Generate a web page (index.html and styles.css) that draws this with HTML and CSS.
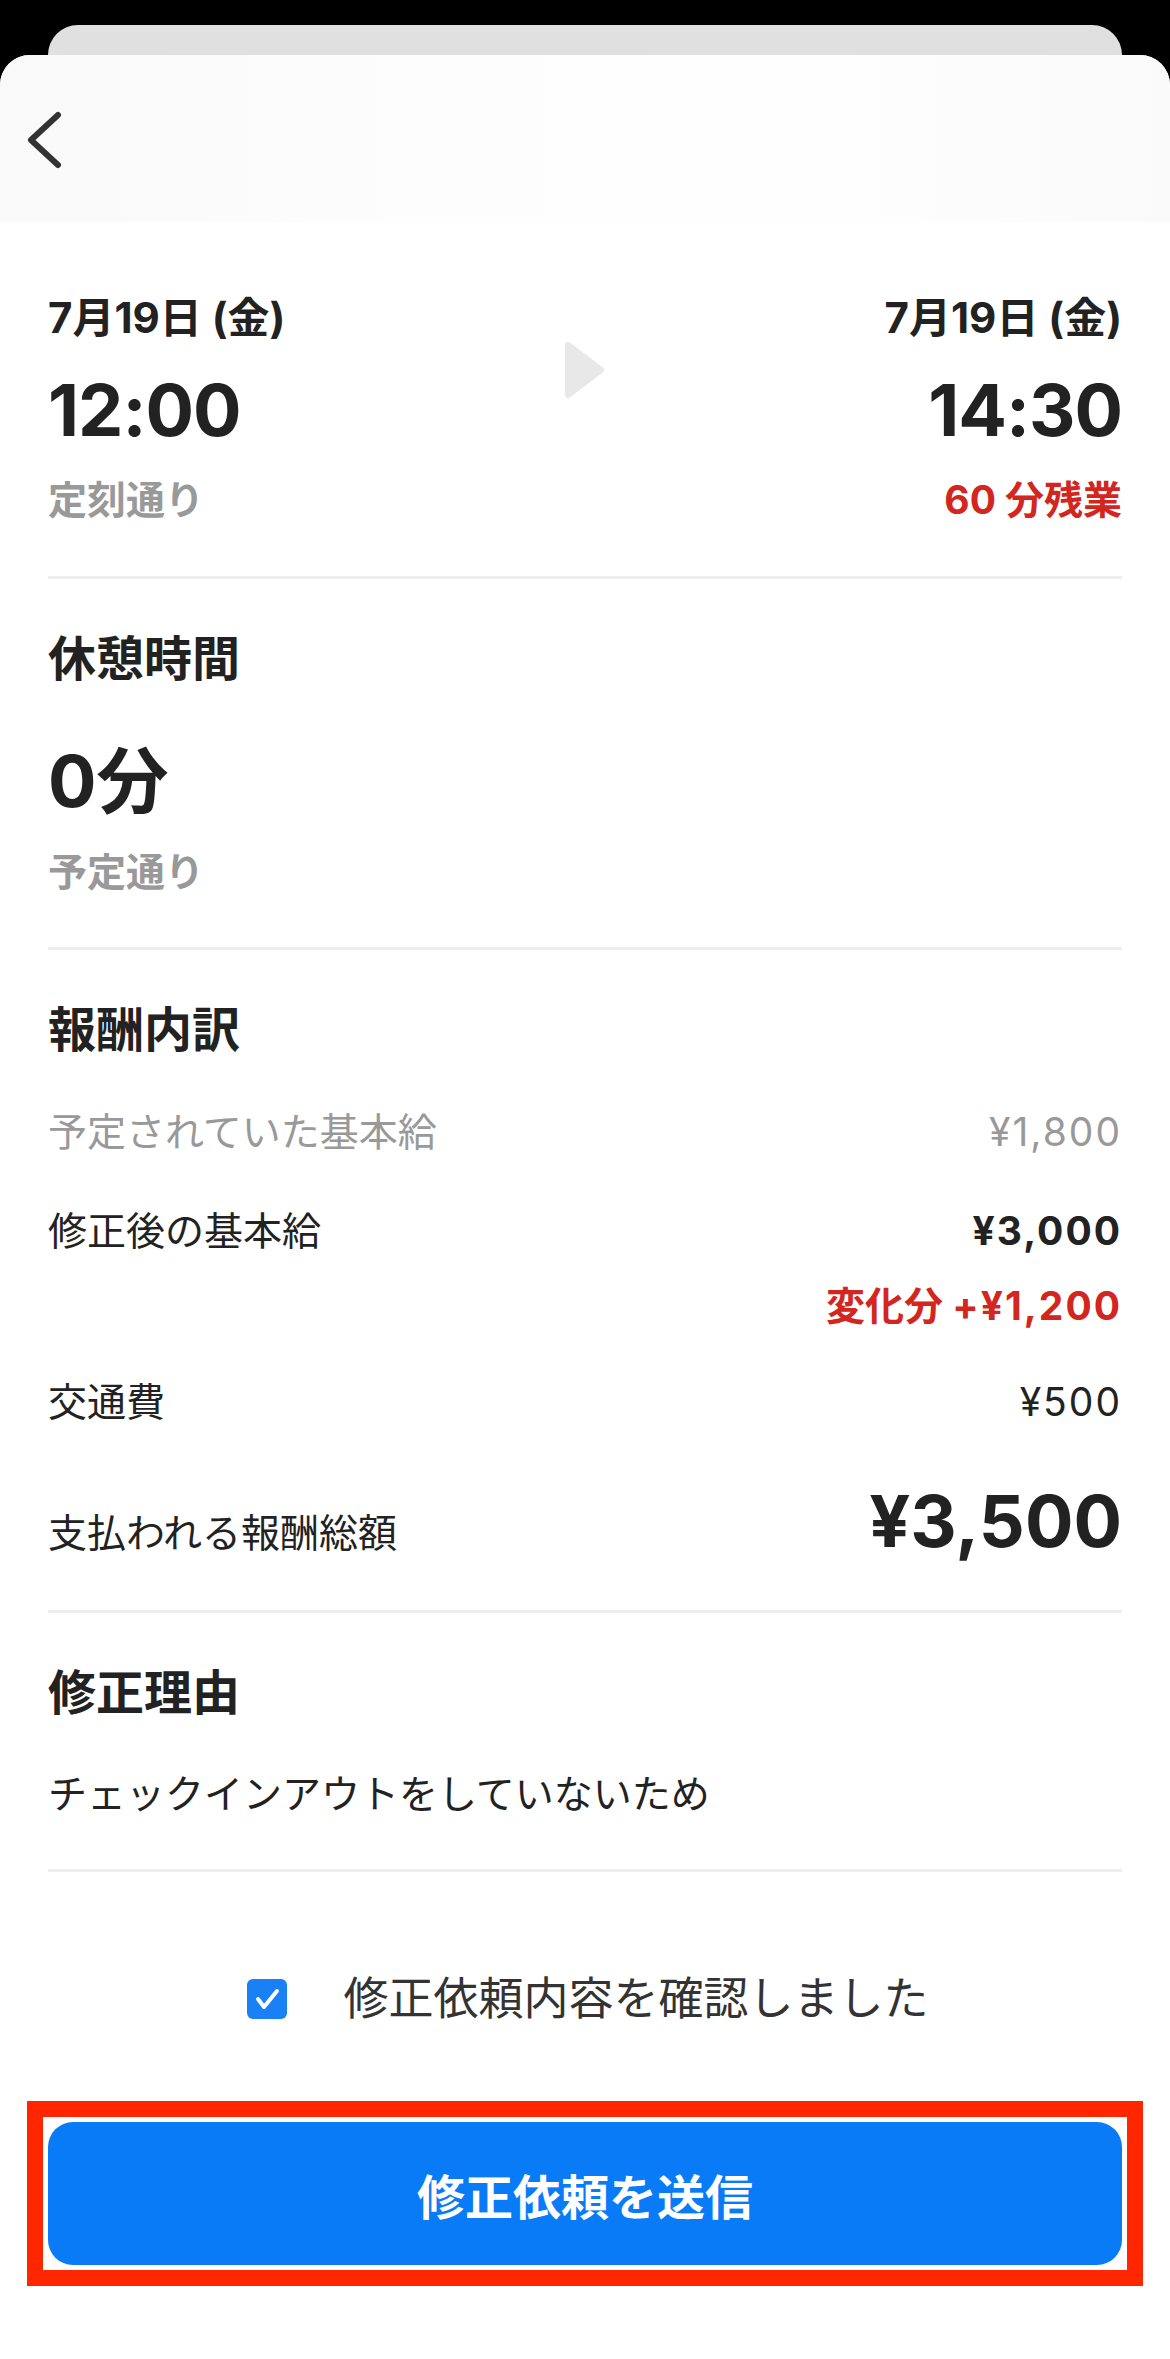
FILE: index.html
```html
<!DOCTYPE html>
<html lang="ja">
<head>
    <meta charset="UTF-8">
    <meta name="viewport" content="width=device-width, initial-scale=1.0">
    <title>修正依頼</title>
    <link rel="stylesheet" href="styles.css">
</head>
<body>
    <div class="back-card"></div>

    <div class="sheet">
        <header class="nav">
            <svg class="back-icon" width="40" height="60" viewBox="0 0 40 60">
                <path d="M33 4 L6 29 L33 54" fill="none" stroke="#333" stroke-width="6" stroke-linecap="round" stroke-linejoin="round"/>
            </svg>
        </header>

        <main class="content">
            <!-- 勤務時間 -->
            <section class="section times">
                <div class="time-col">
                    <p class="date">7月19日 (金)</p>
                    <p class="time">12:00</p>
                    <p class="note">定刻通り</p>
                </div>
                <svg class="arrow" width="44" height="60" viewBox="0 0 44 60">
                    <polygon points="5,5 38,30 5,55" fill="#e8e8e8" stroke="#e8e8e8" stroke-width="6" stroke-linejoin="round"/>
                </svg>
                <div class="time-col right">
                    <p class="date">7月19日 (金)</p>
                    <p class="time">14:30</p>
                    <p class="note red"><span class="num">60</span>分残業</p>
                </div>
            </section>

            <!-- 休憩 -->
            <section class="section">
                <h2>休憩時間</h2>
                <p class="big-value">0分</p>
                <p class="note">予定通り</p>
            </section>

            <!-- 報酬 -->
            <section class="section pay">
                <h2>報酬内訳</h2>
                <div class="row muted first">
                    <span>予定されていた基本給</span>
                    <span class="amount">¥1,800</span>
                </div>
                <div class="row">
                    <span>修正後の基本給</span>
                    <span class="amount strong">¥3,000</span>
                </div>
                <div class="diff">変化分 <span class="amount">+¥1,200</span></div>
                <div class="row fare">
                    <span>交通費</span>
                    <span class="amount">¥500</span>
                </div>
                <div class="row total">
                    <span>支払われる報酬総額</span>
                    <span class="total-amount">¥3,500</span>
                </div>
            </section>

            <!-- 理由 -->
            <section class="section">
                <h2>修正理由</h2>
                <p class="reason">チェックインアウトをしていないため</p>
            </section>

            <label class="confirm">
                <span class="checkbox">
                    <svg width="40" height="40" viewBox="0 0 40 40">
                        <path d="M11 20 L17 28 L30 12" fill="none" stroke="#fff" stroke-width="4" stroke-linecap="round" stroke-linejoin="round"/>
                    </svg>
                </span>
                <span>修正依頼内容を確認しました</span>
            </label>
        </main>

        <div class="submit-wrap">
            <button type="button" class="submit">修正依頼を送信</button>
        </div>
    </div>
</body>
</html>
```

FILE: styles.css
```css
* {
    margin: 0;
    padding: 0;
    box-sizing: border-box;
}

body {
    font-family: Inter, "Noto Sans CJK JP", sans-serif;
    background-color: #000;
    color: #222;
    padding-top: 25px;
    width: 1170px;
    min-height: 2359px;
}

.back-card {
    height: 30px;
    margin: 0 48px;
    background-color: #e0e0e0;
    border-radius: 30px 30px 0 0;
}

.sheet {
    background-color: #fff;
    border-radius: 30px 30px 0 0;
    min-height: 2304px;
    overflow: hidden;
}

.nav {
    height: 167px;
    padding: 56px 0 0 25px;
    background: linear-gradient(90deg, #f9f9f9 0%, #fdfdfd 35%, #fefefe 70%, #fafafa 100%);
}

.back-icon {
    display: block;
}

.content {
    padding: 0 48px;
}

.section {
    padding: 52px 0 51px;
    border-bottom: 3px solid #eeeeee;
}

/* 勤務時間 */
.times {
    display: grid;
    grid-template-columns: 1fr auto 1fr;
    padding: 71px 0 52px;
}

.time-col.right {
    text-align: right;
}

.arrow {
    display: block;
    margin-top: 47px;
}

.date {
    font-size: 42px;
    line-height: 50px;
    font-weight: 700;
}

.time {
    font-size: 72px;
    line-height: 80px;
    font-weight: 700;
    margin-top: 27px;
    letter-spacing: -1px;
}

.note {
    font-size: 39px;
    line-height: 48px;
    font-weight: 700;
    color: #999;
    margin-top: 26px;
}

.red {
    color: #d2261e;
}

.num {
    margin-right: 9px;
}

h2 {
    font-size: 48px;
    line-height: 56px;
    font-weight: 700;
}

.big-value {
    font-size: 72px;
    line-height: 80px;
    font-weight: 700;
    margin-top: 54px;
}

.big-value + .note {
    margin-top: 27px;
}

/* 報酬内訳 */
.row {
    display: flex;
    justify-content: space-between;
    align-items: baseline;
    font-size: 39px;
    line-height: 48px;
    margin-top: 51px;
}

.row.first {
    margin-top: 50px;
}

.row.fare {
    margin-top: 48px;
}

.row.muted {
    color: #999;
}

.amount {
    letter-spacing: 2px;
}

.strong {
    font-weight: 700;
}

.diff {
    text-align: right;
    font-size: 39px;
    line-height: 48px;
    font-weight: 700;
    color: #d2261e;
    margin-top: 27px;
}

.row.total {
    margin-top: 55px;
}

.total-amount {
    font-size: 72px;
    line-height: 80px;
    font-weight: 700;
}

.pay {
    padding-bottom: 49px;
}

.reason {
    font-size: 39px;
    line-height: 48px;
    margin-top: 49px;
}

/* 確認 */
.confirm {
    display: flex;
    justify-content: center;
    align-items: center;
    gap: 56px;
    margin-top: 99px;
    padding-left: 6px;
    font-size: 45px;
    line-height: 56px;
    color: #333;
}

.checkbox {
    width: 40px;
    height: 40px;
    border-radius: 6px;
    background-color: #1a80f5;
}

.checkbox svg {
    display: block;
}

.submit-wrap {
    margin: 74px 27px 0;
    border: 16px solid #ff2600;
    padding: 5px;
}

.submit {
    display: block;
    width: 100%;
    height: 143px;
    border: none;
    border-radius: 25px;
    background-color: #0a7bf6;
    color: #fff;
    font-family: Inter, "Noto Sans CJK JP", sans-serif;
    font-size: 48px;
    font-weight: 700;
}
```
